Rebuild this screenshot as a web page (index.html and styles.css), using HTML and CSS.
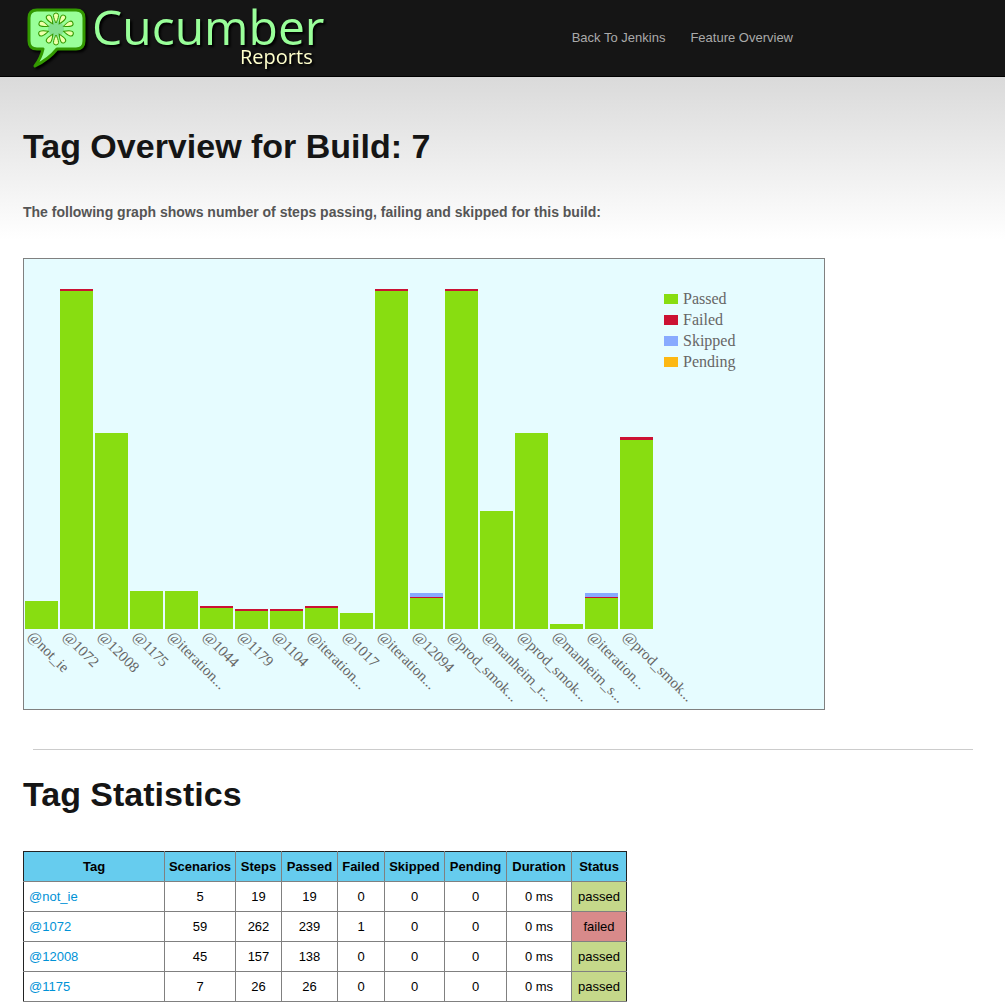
FILE: index.html
```html
<!DOCTYPE html>
<html lang="en">
<head>
<meta charset="utf-8">
<title>Cucumber Reports - Tag Overview</title>
<link rel="stylesheet" href="styles.css">
</head>
<body>
<header class="topbar">
  <div class="container topbar-inner">
    <svg class="logo" width="306" height="72" viewBox="0 0 306 72" role="img" aria-label="Cucumber Reports">
      <path class="bubble" d="M14 10H53Q61 10 61 18V41Q61 49 53 49H34Q26 59 12 66Q18 58 20 49H14Q6 49 6 41V18Q6 10 14 10Z"/>
      <circle class="core" cx="33" cy="29" r="8"/>
      <g class="seeds" transform="translate(33 29)">
        <path id="seed" d="M0 -6C-1 -8 -2.5 -11 -2.5 -13.5A2.5 2.5 0 0 1 2.5 -13.5C2.5 -11 1 -8 0 -6Z"/>
        <use href="#seed" transform="rotate(32)"/>
        <use href="#seed" transform="rotate(70) translate(0 -2)"/>
        <use href="#seed" transform="rotate(107) translate(0 -2)"/>
        <use href="#seed" transform="rotate(148)"/>
        <use href="#seed" transform="rotate(180)"/>
        <use href="#seed" transform="rotate(212)"/>
        <use href="#seed" transform="rotate(253) translate(0 -2)"/>
        <use href="#seed" transform="rotate(290) translate(0 -2)"/>
        <use href="#seed" transform="rotate(328)"/>
      </g>
      <text class="logo-name" x="69" y="45">Cucumber</text>
      <text class="logo-sub" x="217" y="64">Reports</text>
    </svg>
    <nav class="nav">
      <a href="#">Back To Jenkins</a>
      <a href="#">Feature Overview</a>
    </nav>
  </div>
</header>
<main class="container">
  <h1 class="title">Tag Overview for Build: 7</h1>
  <p class="intro">The following graph shows number of steps passing, failing and skipped for this build:</p>
  <svg class="chart" viewBox="0 0 800 450" role="img" aria-label="Steps by tag">
    <g class="passed">
      <rect x="1" y="342" width="33" height="28"/>
      <rect x="36" y="32" width="33" height="338"/>
      <rect x="71" y="174" width="33" height="196"/>
      <rect x="106" y="332" width="33" height="38"/>
      <rect x="141" y="332" width="33" height="38"/>
      <rect x="176" y="349" width="33" height="21"/>
      <rect x="211" y="352" width="33" height="18"/>
      <rect x="246" y="352" width="33" height="18"/>
      <rect x="281" y="349" width="33" height="21"/>
      <rect x="316" y="354" width="33" height="16"/>
      <rect x="351" y="32" width="33" height="338"/>
      <rect x="386" y="339" width="33" height="31"/>
      <rect x="421" y="32" width="33" height="338"/>
      <rect x="456" y="252" width="33" height="118"/>
      <rect x="491" y="174" width="33" height="196"/>
      <rect x="526" y="365" width="33" height="5"/>
      <rect x="561" y="339" width="33" height="31"/>
      <rect x="596" y="181" width="33" height="189"/>
    </g>
    <g class="failed">
      <rect x="36" y="30" width="33" height="2"/>
      <rect x="176" y="347" width="33" height="2"/>
      <rect x="211" y="350" width="33" height="2"/>
      <rect x="246" y="350" width="33" height="2"/>
      <rect x="281" y="347" width="33" height="2"/>
      <rect x="351" y="30" width="33" height="2"/>
      <rect x="386" y="338" width="33" height="1"/>
      <rect x="421" y="30" width="33" height="2"/>
      <rect x="561" y="338" width="33" height="1"/>
      <rect x="596" y="178" width="33" height="3"/>
    </g>
    <g class="skipped">
      <rect x="386" y="334" width="33" height="4"/>
      <rect x="561" y="334" width="33" height="4"/>
    </g>
    <g class="chart-text">
      <text transform="translate(3 378) rotate(45)">@not_ie</text>
      <text transform="translate(38 378) rotate(45)">@1072</text>
      <text transform="translate(73 378) rotate(45)">@12008</text>
      <text transform="translate(108 378) rotate(45)">@1175</text>
      <text transform="translate(143 378) rotate(45)">@iteration...</text>
      <text transform="translate(178 378) rotate(45)">@1044</text>
      <text transform="translate(213 378) rotate(45)">@1179</text>
      <text transform="translate(248 378) rotate(45)">@1104</text>
      <text transform="translate(283 378) rotate(45)">@iteration...</text>
      <text transform="translate(318 378) rotate(45)">@1017</text>
      <text transform="translate(353 378) rotate(45)">@iteration...</text>
      <text transform="translate(388 378) rotate(45)">@12094</text>
      <text transform="translate(423 378) rotate(45)">@prod_smok...</text>
      <text transform="translate(458 378) rotate(45)">@manheim_r...</text>
      <text transform="translate(493 378) rotate(45)">@prod_smok...</text>
      <text transform="translate(528 378) rotate(45)">@manheim_s...</text>
      <text transform="translate(563 378) rotate(45)">@iteration...</text>
      <text transform="translate(598 378) rotate(45)">@prod_smok...</text>
    </g>
    <g class="legend">
      <rect class="passed" x="640" y="35" width="14" height="10"/>
      <text x="659" y="45">Passed</text>
      <rect class="failed" x="640" y="56" width="14" height="10"/>
      <text x="659" y="66">Failed</text>
      <rect class="skipped" x="640" y="77" width="14" height="10"/>
      <text x="659" y="87">Skipped</text>
      <rect class="pending" x="640" y="98" width="14" height="10"/>
      <text x="659" y="108">Pending</text>
    </g>
  </svg>
  <hr class="rule">
  <h2 class="title">Tag Statistics</h2>
  <table class="stats">
    <colgroup>
      <col class="w-tag"><col class="w-scenarios"><col class="w-steps"><col class="w-passed"><col class="w-failed"><col class="w-skipped"><col class="w-pending"><col class="w-duration"><col class="w-status">
    </colgroup>
    <thead>
      <tr><th>Tag</th><th>Scenarios</th><th>Steps</th><th>Passed</th><th>Failed</th><th>Skipped</th><th>Pending</th><th>Duration</th><th>Status</th></tr>
    </thead>
    <tbody>
      <tr><td><a href="#">@not_ie</a></td><td>5</td><td>19</td><td>19</td><td>0</td><td>0</td><td>0</td><td>0 ms</td><td class="ok">passed</td></tr>
      <tr><td><a href="#">@1072</a></td><td>59</td><td>262</td><td>239</td><td>1</td><td>0</td><td>0</td><td>0 ms</td><td class="bad">failed</td></tr>
      <tr><td><a href="#">@12008</a></td><td>45</td><td>157</td><td>138</td><td>0</td><td>0</td><td>0</td><td>0 ms</td><td class="ok">passed</td></tr>
      <tr><td><a href="#">@1175</a></td><td>7</td><td>26</td><td>26</td><td>0</td><td>0</td><td>0</td><td>0 ms</td><td class="ok">passed</td></tr>
    </tbody>
  </table>
</main>
</body>
</html>
```
FILE: styles.css
```css
* { box-sizing: border-box; }

body {
  margin: 0;
  background: #fff linear-gradient(#dadada 77px, #fff 240px) no-repeat;
  color: #000;
  font: 13px/20px "Liberation Sans", Arial, sans-serif;
}

.container {
  max-width: 960px;
  margin: 0 22px 0 23px;
}

.topbar {
  background: #151515;
  border-bottom: 1px solid #000;
}

.topbar-inner {
  display: flex;
  justify-content: space-between;
  min-height: 76px;
  padding-right: 190px;
}

.logo {
  flex: none;
  overflow: visible;
  filter: drop-shadow(2px 2px 1px #000);
}

.bubble {
  fill: #9f9;
  stroke: #390;
  stroke-width: 3;
  stroke-linejoin: round;
}

.core { fill: #7c8; opacity: .6; }

.seeds {
  fill: #efa;
  stroke: #390;
  stroke-width: 1;
}

.logo-name {
  fill: #9f9;
  font: 48px "Open Sans", sans-serif;
}

.logo-sub {
  fill: #ffc;
  font: 20px "Open Sans", sans-serif;
}

.nav {
  display: flex;
  align-items: center;
  gap: 25px;
}

.nav a {
  color: #aaa;
  text-decoration: none;
}

.title {
  margin: 0;
  color: #151515;
  font-size: 34px;
  line-height: 40px;
}

h1.title { padding-top: 49px; }

.intro {
  margin: 36px 0;
  color: #555;
  font-size: 14px;
  font-weight: bold;
}

.chart {
  display: block;
  width: 802px;
  max-width: 100%;
  background: #e6fcff;
  border: 1px solid #808080;
}

.passed { fill: #8d1; }
.failed { fill: #c13; }
.skipped { fill: #8af; }
.pending { fill: #fdb813; }

.chart-text {
  fill: #666;
  font: 15px "Liberation Serif", serif;
}

.legend text {
  fill: #666;
  font: 16px "Liberation Serif", serif;
}

.rule {
  height: 1px;
  margin: 39px 10px 24px;
  border: 0;
  background: #ccc;
}

.stats {
  width: 604px;
  margin-top: 37px;
  table-layout: fixed;
  border-collapse: collapse;
  border: 1px solid #222;
  border-bottom-color: #808080;
  text-align: center;
}

.stats th,
.stats td {
  height: 30px;
  padding: 0;
  border: 1px solid #808080;
}

.stats th {
  background: #66ccee;
  border-top-color: #222;
}

.stats th:first-child,
.stats td:first-child { border-left-color: #222; }

.stats th:last-child,
.stats td:last-child { border-right-color: #222; }

.stats td:first-child {
  padding-left: 5px;
  text-align: left;
}

.stats a {
  color: #0092d6;
  text-decoration: none;
}

.stats .ok { background: #c5d88a; }
.stats .bad { background: #d88a8a; }

.w-tag { width: 141px; }
.w-scenarios { width: 71px; }
.w-steps { width: 46px; }
.w-passed { width: 56px; }
.w-failed { width: 47px; }
.w-skipped { width: 60px; }
.w-pending { width: 62px; }
.w-duration { width: 65px; }
.w-status { width: 55px; }
```
